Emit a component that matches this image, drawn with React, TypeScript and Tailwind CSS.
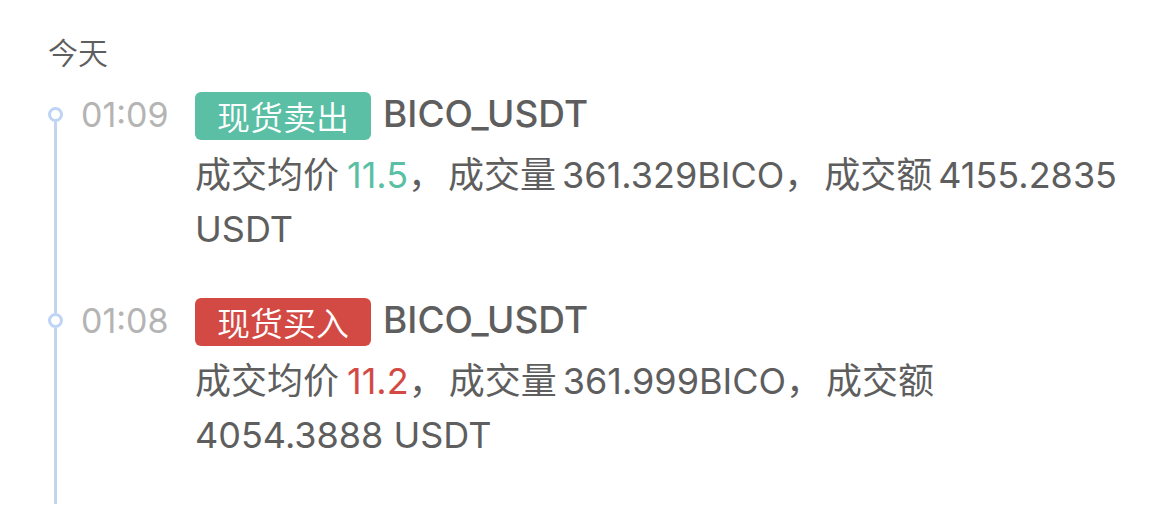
interface Trade {
  id: number;
  time: string;
  side: "sell" | "buy";
  pair: string;
  price: string;
  amount: string;
  total: string;
}

const trades: Trade[] = [
  {
    id: 1,
    time: "01:09",
    side: "sell",
    pair: "BICO_USDT",
    price: "11.5",
    amount: "361.329BICO",
    total: "4155.2835 USDT",
  },
  {
    id: 2,
    time: "01:08",
    side: "buy",
    pair: "BICO_USDT",
    price: "11.2",
    amount: "361.999BICO",
    total: "4054.3888 USDT",
  },
];

const sides = {
  sell: { label: "现货卖出", badge: "bg-[#5abfa5]", text: "text-[#5abfa5]" },
  buy: { label: "现货买入", badge: "bg-[#d34a45]", text: "text-[#d34a45]" },
};

function TradeItem({ trade }: { trade: Trade }) {
  const side = sides[trade.side];

  return (
    <li className="group flex">
      {/* Timeline rail */}
      <div className="flex w-[15px] shrink-0 flex-col items-center" aria-hidden="true">
        <div className="h-[15px] w-[3px] bg-[#c3d4f2] group-first:invisible" />
        <div className="size-[15px] rounded-full border-3 border-[#bed4f5]" />
        <div className="w-[3px] flex-1 bg-[#c3d4f2]" />
      </div>

      <time className="ml-[18px] w-[114px] shrink-0 text-[34px] leading-[46px] text-[#b4b4b4]">
        {trade.time}
      </time>

      <div className="min-w-0 flex-1 pb-[42px]">
        <div className="flex items-start gap-3">
          <span className={`rounded-md px-[22px] pt-1 text-[33px] leading-[44px] font-[350] text-white ${side.badge}`}>
            {side.label}
          </span>
          <h3 className="text-[37px] leading-[44px] font-medium">{trade.pair}</h3>
        </div>
        <p className="mt-2 text-4xl leading-[54px] font-[380]">
          <span className="mr-2">成交均价</span>
          <span className={side.text}>{trade.price}</span>
          <span className="mr-1">，</span>
          <span className="mr-1.5">成交量</span>
          {trade.amount}
          <span className="mr-1">，</span>
          <span className="mr-1.5">成交额</span>
          {trade.total}
        </p>
      </div>
    </li>
  );
}

export default function App() {
  return (
    <main className="min-h-screen bg-white pt-8 pr-12 pl-12 font-['Inter','Noto_Sans_CJK_SC',sans-serif] text-[#5e5e5e]" lang="zh-CN">
      <h2 className="mb-[18px] text-3xl leading-[42px] font-[350]">今天</h2>
      <ol>
        {trades.map((trade) => (
          <TradeItem key={trade.id} trade={trade} />
        ))}
      </ol>
    </main>
  );
}
